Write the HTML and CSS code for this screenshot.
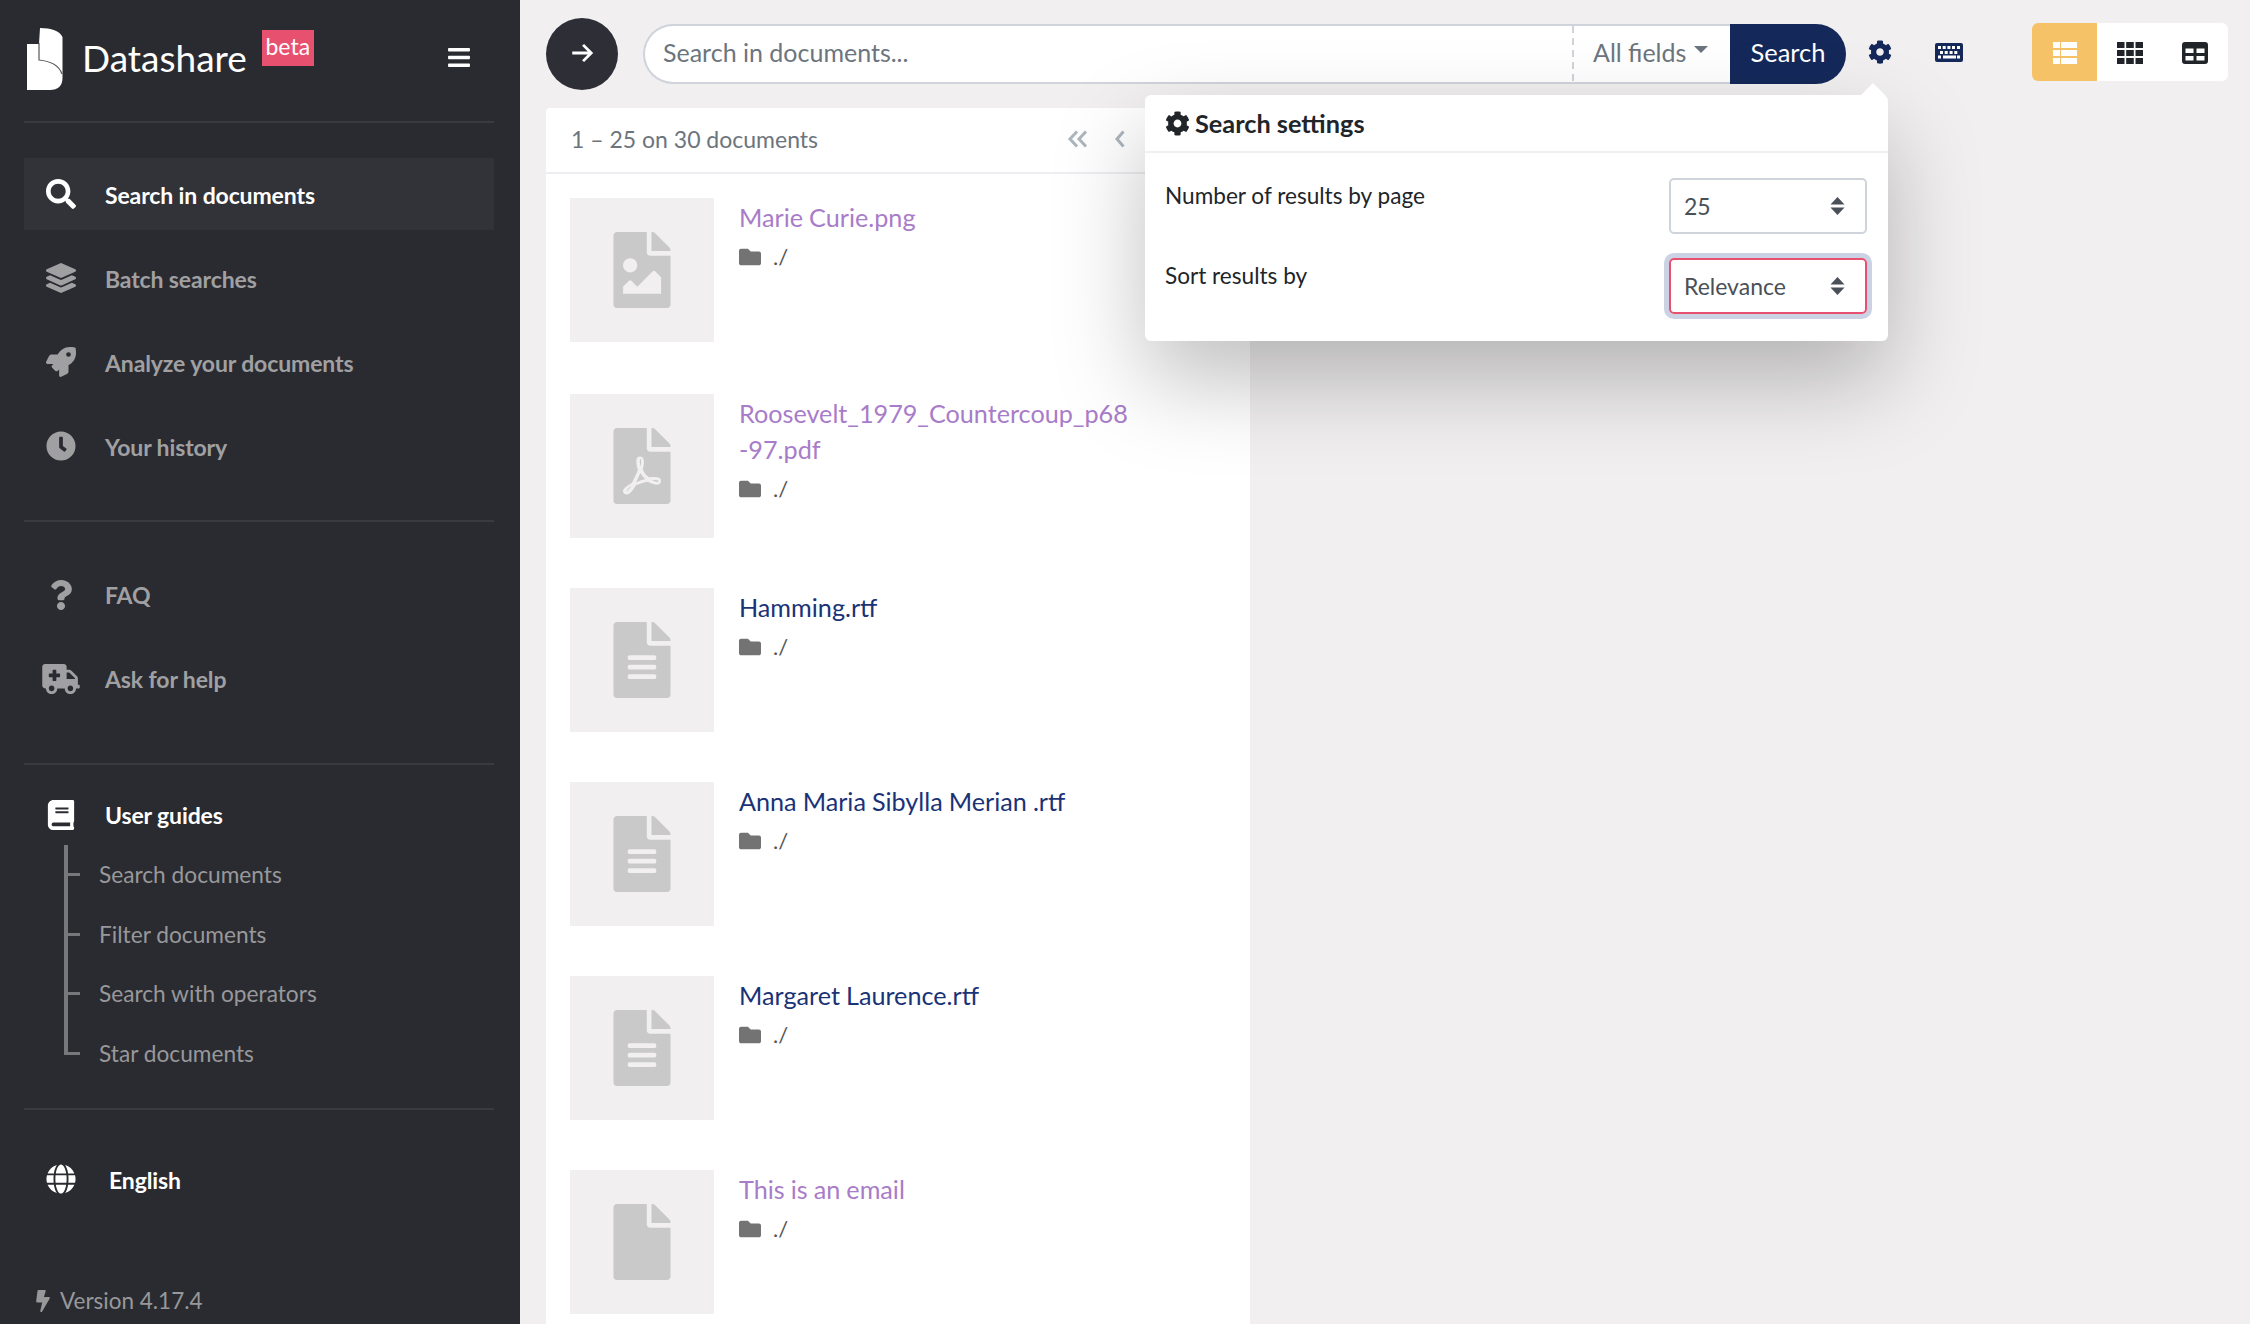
FILE: index.html
```html
<!DOCTYPE html>
<html>
<head>
<title>Datashare</title>
<link rel="stylesheet" href="styles.css">
</head>
<body>
<svg class="defs" xmlns="http://www.w3.org/2000/svg">
  <symbol id="i-search" viewBox="0 0 512 512"><path d="M505 442.7L405.3 343c-4.5-4.5-10.6-7-17-7H372c27.6-35.3 44-79.7 44-128C416 93.1 322.9 0 208 0S0 93.1 0 208s93.1 208 208 208c48.3 0 92.7-16.4 128-44v16.3c0 6.4 2.5 12.5 7 17l99.7 99.7c9.4 9.4 24.6 9.4 33.9 0l28.3-28.3c9.4-9.4 9.4-24.6.1-34zM208 336c-70.7 0-128-57.2-128-128 0-70.7 57.2-128 128-128 70.7 0 128 57.2 128 128 0 70.7-57.2 128-128 128z"/></symbol>
  <symbol id="i-layers" viewBox="0 0 512 512"><path d="M12.41 148.02l232.94 105.67c6.8 3.09 14.49 3.09 21.29 0l232.94-105.67c16.55-7.51 16.55-32.52 0-40.03L266.65 2.31a25.607 25.607 0 0 0-21.29 0L12.41 107.98c-16.55 7.51-16.55 32.53 0 40.04zm487.18 88.28l-58.09-26.33-161.64 73.27c-7.56 3.43-15.59 5.17-23.86 5.17s-16.29-1.74-23.86-5.17L70.51 209.97l-58.1 26.33c-16.55 7.5-16.55 32.5 0 40l232.94 105.59c6.8 3.08 14.49 3.08 21.29 0L499.59 276.3c16.55-7.5 16.55-32.5 0-40zm0 127.8l-57.87-26.23-161.86 73.37c-7.56 3.43-15.59 5.17-23.86 5.17s-16.29-1.74-23.86-5.17L70.29 337.87 12.41 364.1c-16.55 7.5-16.55 32.5 0 40l232.94 105.59c6.8 3.08 14.49 3.08 21.29 0L499.59 404.1c16.55-7.5 16.55-32.5 0-40z"/></symbol>
  <symbol id="i-rocket" viewBox="0 0 512 512"><path d="M505.12 19.09c-1.19-5.53-6.66-11-12.21-12.18C460.72 0 435.51 0 410.41 0 307.18 0 245.27 55.2 199.05 128H94.84c-16.35.02-35.56 11.88-42.89 26.48L2.52 253.3A28.4 28.4 0 0 0 0 264a24 24 0 0 0 24 24h103.82l-22.48 22.47c-11.36 11.36-13 32.26 0 45.25l50.91 50.91c11.16 11.19 32.16 13.16 45.28 0l22.47-22.47V488a24 24 0 0 0 24 24 28.56 28.56 0 0 0 10.71-2.52l98.73-49.39c14.63-7.3 26.51-26.5 26.51-42.86V312.8c72.6-46.31 128.03-108.41 128.03-211.09.01-25.2.01-50.4-6.95-82.62zM384.04 168a40 40 0 1 1 40.01-40 40.02 40.02 0 0 1-40.01 40z"/></symbol>
  <symbol id="i-clock" viewBox="0 0 512 512"><path d="M256 8C119 8 8 119 8 256s111 248 248 248 248-111 248-248S393 8 256 8zm92.49 313l-20 25a16 16 0 0 1-22.49 2.5l-67-49.72a40 40 0 0 1-15-31.23V112a16 16 0 0 1 16-16h32a16 16 0 0 1 16 16v144l58 42.5a16 16 0 0 1 2.49 22.5z"/></symbol>
  <symbol id="i-question" viewBox="0 0 384 512"><path d="M202.021 0C122.202 0 70.503 32.703 29.914 91.026c-7.363 10.58-5.093 25.086 5.178 32.874l43.138 32.709c10.373 7.865 25.132 6.026 33.253-4.148 25.049-31.381 43.63-49.449 82.757-49.449 30.764 0 68.816 19.799 68.816 49.631 0 22.552-18.617 34.134-48.993 51.164-35.423 19.86-82.299 44.576-82.299 106.405V320c0 13.255 10.745 24 24 24h72.471c13.255 0 24-10.745 24-24v-5.773c0-42.86 125.268-44.645 125.268-160.627C377.504 66.256 286.902 0 202.021 0zM192 373.459c-38.196 0-69.271 31.075-69.271 69.271 0 38.195 31.075 69.27 69.271 69.27s69.271-31.075 69.271-69.271-31.075-69.27-69.271-69.27z"/></symbol>
  <symbol id="i-ambulance" viewBox="0 0 640 512"><path d="M624 352h-16V243.9c0-12.7-5.1-24.9-14.1-33.9L494 110.1c-9-9-21.2-14.1-33.9-14.1H416V48c0-26.5-21.5-48-48-48H48C21.5 0 0 21.5 0 48v320c0 26.5 21.5 48 48 48h16c0 53 43 96 96 96s96-43 96-96h128c0 53 43 96 96 96s96-43 96-96h48c8.8 0 16-7.2 16-16v-32c0-8.8-7.2-16-16-16zM160 464c-26.5 0-48-21.5-48-48s21.5-48 48-48 48 21.5 48 48-21.5 48-48 48zm144-248c0 4.4-3.6 8-8 8h-56v56c0 4.4-3.6 8-8 8h-48c-4.4 0-8-3.6-8-8v-56h-56c-4.4 0-8-3.6-8-8v-48c0-4.4 3.6-8 8-8h56v-56c0-4.4 3.6-8 8-8h48c4.4 0 8 3.6 8 8v56h56c4.4 0 8 3.6 8 8v48zm176 248c-26.5 0-48-21.5-48-48s21.5-48 48-48 48 21.5 48 48-21.5 48-48 48zm80-208H416V144h44.1l99.9 99.9V256z"/></symbol>
  <symbol id="i-book" viewBox="0 0 448 512"><path d="M448 360V24c0-13.3-10.7-24-24-24H96C43 0 0 43 0 96v320c0 53 43 96 96 96h328c13.3 0 24-10.7 24-24v-16c0-7.5-3.5-14.3-8.9-18.7-4.2-15.4-4.2-59.3 0-74.7 5.4-4.3 8.9-11.1 8.9-18.6zM128 134c0-3.3 2.7-6 6-6h212c3.3 0 6 2.7 6 6v20c0 3.3-2.7 6-6 6H134c-3.3 0-6-2.7-6-6v-20zm0 64c0-3.3 2.7-6 6-6h212c3.3 0 6 2.7 6 6v20c0 3.3-2.7 6-6 6H134c-3.3 0-6-2.7-6-6v-20zm253.4 250H96c-17.7 0-32-14.3-32-32 0-17.6 14.4-32 32-32h285.4c-1.9 17.1-1.9 46.9 0 64z"/></symbol>
  <symbol id="i-globe" viewBox="0 0 496 512"><path d="M336.5 160C322 70.7 287.8 8 248 8s-74 62.7-88.5 152h177zM152 256c0 22.2 1.2 43.5 3.3 64h185.3c2.1-20.5 3.3-41.8 3.3-64s-1.2-43.5-3.3-64H155.3c-2.1 20.5-3.3 41.8-3.3 64zm324.7-96c-28.6-67.9-86.5-120.4-158-141.6 24.4 33.8 41.2 84.7 50 141.6h108zM177.2 18.4C105.8 39.6 47.8 92.1 19.3 160h108c8.7-56.9 25.5-107.8 49.9-141.6zM487.4 192H372.7c2.1 21 3.3 42.5 3.3 64s-1.2 43-3.3 64h114.6c5.5-20.5 8.6-41.8 8.6-64s-3.1-43.5-8.5-64zM120 256c0-21.5 1.2-43 3.3-64H8.6C3.2 212.5 0 233.8 0 256s3.2 43.5 8.6 64h114.6c-2-21-3.2-42.5-3.2-64zm39.5 96c14.5 89.3 48.7 152 88.5 152s74-62.7 88.5-152h-177zm159.3 141.6c71.4-21.2 129.4-73.7 158-141.6h-108c-8.8 56.9-25.6 107.8-50 141.6zM19.3 352c28.6 67.9 86.5 120.4 158 141.6-24.4-33.8-41.2-84.7-50-141.6h-108z"/></symbol>
  <symbol id="i-bolt" viewBox="0 0 320 512"><path d="M296 160H180.6l42.6-129.8C227.2 15 215.7 0 200 0H56C44 0 33.8 8.9 32.2 20.8l-32 240C-1.7 275.2 9.5 288 24 288h118.7L96.6 482.5c-3.6 15.2 8 29.5 23.3 29.5 8.4 0 16.4-4.4 20.8-12l176-304c9.3-15.9-2.2-36-20.7-36z"/></symbol>
  <symbol id="i-bars" viewBox="0 0 448 512"><path d="M16 132h416c8.837 0 16-7.163 16-16V76c0-8.837-7.163-16-16-16H16C7.163 60 0 67.163 0 76v40c0 8.837 7.163 16 16 16zm0 160h416c8.837 0 16-7.163 16-16v-40c0-8.837-7.163-16-16-16H16c-8.837 0-16 7.163-16 16v40c0 8.837 7.163 16 16 16zm0 160h416c8.837 0 16-7.163 16-16v-40c0-8.837-7.163-16-16-16H16c-8.837 0-16 7.163-16 16v40c0 8.837 7.163 16 16 16z"/></symbol>
  <symbol id="i-cog" viewBox="0 0 512 512"><path d="M487.4 315.7l-42.6-24.6c4.3-23.2 4.3-47 0-70.2l42.6-24.6c4.9-2.8 7.1-8.6 5.5-14-11.1-35.6-30-67.8-54.7-94.6-3.8-4.1-10-5.1-14.8-2.3L380.8 110c-17.9-15.4-38.5-27.3-60.8-35.1V25.8c0-5.6-3.9-10.5-9.4-11.7-36.7-8.2-74.3-7.8-109.2 0-5.5 1.2-9.4 6.1-9.4 11.7V75c-22.2 7.9-42.8 19.8-60.8 35.1L88.7 85.5c-4.9-2.8-11-1.9-14.8 2.3-24.7 26.7-43.6 58.9-54.7 94.6-1.7 5.4.6 11.2 5.5 14L67.3 221c-4.3 23.2-4.3 47 0 70.2l-42.6 24.6c-4.9 2.8-7.1 8.6-5.5 14 11.1 35.6 30 67.8 54.7 94.6 3.8 4.1 10 5.1 14.8 2.3l42.6-24.6c17.9 15.4 38.5 27.3 60.8 35.1v49.2c0 5.6 3.9 10.5 9.4 11.7 36.7 8.2 74.3 7.8 109.2 0 5.5-1.2 9.4-6.1 9.4-11.7v-49.2c22.2-7.9 42.8-19.8 60.8-35.1l42.6 24.6c4.9 2.8 11 1.9 14.8-2.3 24.7-26.7 43.6-58.9 54.7-94.6 1.5-5.5-.7-11.3-5.6-14.1zM256 336c-44.1 0-80-35.9-80-80s35.9-80 80-80 80 35.9 80 80-35.9 80-80 80z"/></symbol>
  <symbol id="i-folder" viewBox="0 0 512 512"><path d="M464 128H272l-64-64H48C21.49 64 0 85.49 0 112v288c0 26.51 21.49 48 48 48h416c26.51 0 48-21.49 48-48V176c0-26.51-21.49-48-48-48z"/></symbol>
  <symbol id="i-file" viewBox="0 0 384 512"><path d="M224 136V0H24C10.7 0 0 10.7 0 24v464c0 13.3 10.7 24 24 24h336c13.3 0 24-10.7 24-24V160H248c-13.2 0-24-10.8-24-24zm160-14.1v6.1H256V0h6.1c6.4 0 12.5 2.5 17 7l97.9 98c4.5 4.5 7 10.6 7 16.9z"/></symbol>
  <symbol id="i-file-alt" viewBox="0 0 384 512"><path d="M224 136V0H24C10.7 0 0 10.7 0 24v464c0 13.3 10.7 24 24 24h336c13.3 0 24-10.7 24-24V160H248c-13.2 0-24-10.8-24-24zm64 236c0 6.6-5.4 12-12 12H108c-6.6 0-12-5.4-12-12v-8c0-6.6 5.4-12 12-12h168c6.6 0 12 5.4 12 12v8zm0-64c0 6.6-5.4 12-12 12H108c-6.6 0-12-5.4-12-12v-8c0-6.6 5.4-12 12-12h168c6.6 0 12 5.4 12 12v8zm0-72v8c0 6.6-5.4 12-12 12H108c-6.6 0-12-5.4-12-12v-8c0-6.6 5.4-12 12-12h168c6.6 0 12 5.4 12 12zm96-114.1v6.1H256V0h6.1c6.4 0 12.5 2.5 17 7l97.9 98c4.5 4.5 7 10.6 7 16.9z"/></symbol>
  <symbol id="i-file-image" viewBox="0 0 384 512"><path d="M384 121.941V128H256V0h6.059a24 24 0 0 1 16.97 7.029l97.941 97.941a24.002 24.002 0 0 1 7.03 16.971zM248 160c-13.2 0-24-10.8-24-24V0H24C10.745 0 0 10.745 0 24v464c0 13.255 10.745 24 24 24h336c13.255 0 24-10.745 24-24V160H248zm-135.455 16c26.51 0 48 21.49 48 48s-21.49 48-48 48-48-21.49-48-48 21.491-48 48-48zm208 240h-256l.485-48.485L104.545 328c4.686-4.686 11.799-4.201 16.485.485L160.545 368 264.06 264.485c4.686-4.686 12.284-4.686 16.97 0L320.545 304v112z"/></symbol>
  <symbol id="i-file-pdf" viewBox="0 0 384 512"><path d="M181.9 256.1c-5-16-4.9-46.9-2-46.9 8.4 0 7.6 36.9 2 46.9zm-1.7 47.2c-7.7 20.2-17.3 43.3-28.4 62.7 18.3-7 39-17.2 62.9-21.9-12.7-9.6-24.9-23.4-34.5-40.8zM86.1 428.1c0 .8 13.2-5.4 34.9-40.2-6.7 6.3-29.1 24.5-34.9 40.2zM248 160h136v328c0 13.3-10.7 24-24 24H24c-13.3 0-24-10.7-24-24V24C0 10.7 10.7 0 24 0h200v136c0 13.2 10.8 24 24 24zm-8 171.8c-20-12.2-33.3-29-42.7-53.8 4.5-18.5 11.6-46.6 6.2-64.2-4.7-29.4-42.4-26.5-47.8-6.8-5 18.3-.4 44.1 8.1 77-11.6 27.6-28.7 64.6-40.8 85.8-.1 0-.1.1-.2.1-27.1 13.9-73.6 44.5-54.5 68 5.6 6.9 16 10 21.5 10 17.9 0 35.7-18 61.1-61.8 25.8-8.5 54.1-19.1 79-23.2 21.7 11.8 47.1 19.5 64 19.5 29.2 0 31.2-32 19.7-43.4-13.9-13.6-54.3-9.7-73.6-7.2zM377 105L279 7c-4.5-4.5-10.6-7-17-7h-6v128h128v-6.1c0-6.3-2.5-12.4-7-16.9zm-74.1 255.3c4.1-2.7-2.5-11.9-42.8-9 37.1 15.8 42.8 9 42.8 9z"/></symbol>
  <symbol id="i-sort" viewBox="0 0 16 19"><path d="M8 0l7.500 8H.5zM8 19L.5 11h15z"/></symbol>
</svg>

<div class="app">
  <aside class="sidebar">
    <div class="brand">
      <svg class="logo" viewBox="0 0 36 62"><path fill="#fff" d="M13 0C24 0 33 3 35.500 9V50C35.500 58 31 62 23 62H0V16H12z"/><path fill="none" stroke="#55565a" stroke-width="1.200" d="M12 15V32C22 33 32 37 35 46"/></svg>
      <span class="brand-name">Datashare</span>
      <span class="beta">beta</span>
      <svg class="burger"><use href="#i-bars"/></svg>
    </div>

    <nav class="group group-main">
      <a class="item active"><span class="ico"><svg><use href="#i-search"/></svg></span>Search in documents</a>
      <a class="item"><span class="ico"><svg><use href="#i-layers"/></svg></span>Batch searches</a>
      <a class="item"><span class="ico"><svg><use href="#i-rocket"/></svg></span>Analyze your documents</a>
      <a class="item"><span class="ico"><svg><use href="#i-clock"/></svg></span>Your history</a>
    </nav>

    <nav class="group group-help">
      <a class="item"><span class="ico"><svg><use href="#i-question"/></svg></span>FAQ</a>
      <a class="item"><span class="ico ico-wide"><svg><use href="#i-ambulance"/></svg></span>Ask for help</a>
    </nav>

    <div class="group group-guides">
      <a class="item item-guides"><span class="ico"><svg><use href="#i-book"/></svg></span>User guides</a>
      <ul class="guides">
        <li>Search documents</li>
        <li>Filter documents</li>
        <li>Search with operators</li>
        <li>Star documents</li>
      </ul>
    </div>

    <a class="item item-lang"><span class="ico"><svg><use href="#i-globe"/></svg></span>English</a>
    <div class="version"><svg><use href="#i-bolt"/></svg>Version 4.17.4</div>
  </aside>

  <main class="main">
    <div class="topbar">
      <button class="back">
        <svg viewBox="0 0 24 24"><path d="M3 12h17M13 4.500l7.500 7.500-7.500 7.500"/></svg>
      </button>
      <form class="search">
        <input type="text" placeholder="Search in documents...">
        <span class="fields">All fields<i class="caret"></i></span>
        <span class="search-btn">Search</span>
      </form>
      <svg class="tool tool-cog"><use href="#i-cog"/></svg>
      <svg class="tool tool-keys" viewBox="0 0 28 19">
        <rect width="28" height="19" rx="2"/>
        <path class="keys" d="M3 3h3v3H3zM7.700 3h3v3h-3zM12.400 3h3v3h-3zM17 3h3v3h-3zM22 3h3v3h-3zM5 8h3v3H5zM9.700 8h3v3h-3zM14.600 8h3v3h-3zM19.300 8h3v3h-3zM3 12.500h3v3H3zM8 12.500h13v3H8zM22 12.500h3v3h-3z"/>
      </svg>
      <div class="views">
        <span class="view on">
          <svg viewBox="0 0 24 22"><path d="M0 0h7v6H0zM8 0h16v6H8zM0 8h7v6H0zM8 8h16v6H8zM0 16h7v6H0zM8 16h16v6H8z"/></svg>
        </span>
        <span class="view">
          <svg viewBox="0 0 26 22"><path d="M0 0h7.500v6H0zM9.200 0h7.600v6H9.200zM18.500 0H26v6h-7.500zM0 8h7.500v6H0zM9.200 8h7.600v6H9.200zM18.500 8H26v6h-7.500zM0 16h7.500v6H0zM9.200 16h7.600v6H9.200zM18.500 16H26v6h-7.500z"/></svg>
        </span>
        <span class="view">
          <svg viewBox="0 0 26 22"><path fill-rule="evenodd" d="M3 0h20a3 3 0 0 1 3 3v16a3 3 0 0 1-3 3H3a3 3 0 0 1-3-3V3a3 3 0 0 1 3-3zM3.500 6.500V11h8V6.500zM14.500 6.500V11h8V6.500zM3.500 14v4.500h8V14zM14.500 14v4.500h8V14z"/></svg>
        </span>
      </div>
    </div>

    <section class="results">
      <header class="results-head">
        <span>1 – 25 on 30 documents</span>
        <span class="pager">
          <svg viewBox="0 0 22 18"><path d="M10 1.500L3 9l7 7.500M19 1.500L12 9l7 7.500"/></svg>
          <svg viewBox="0 0 10 18"><path d="M8.500 1.500L2 9l6.500 7.500"/></svg>
        </span>
      </header>
      <div class="doc">
        <div class="thumb"><svg><use href="#i-file-image"/></svg></div>
        <div class="doc-body"><a class="doc-title seen">Marie Curie.png</a><div class="doc-path"><svg><use href="#i-folder"/></svg>./</div></div>
      </div>
      <div class="doc">
        <div class="thumb"><svg><use href="#i-file-pdf"/></svg></div>
        <div class="doc-body"><a class="doc-title seen">Roosevelt_1979_Countercoup_p68<br>-97.pdf</a><div class="doc-path"><svg><use href="#i-folder"/></svg>./</div></div>
      </div>
      <div class="doc">
        <div class="thumb"><svg><use href="#i-file-alt"/></svg></div>
        <div class="doc-body"><a class="doc-title">Hamming.rtf</a><div class="doc-path"><svg><use href="#i-folder"/></svg>./</div></div>
      </div>
      <div class="doc">
        <div class="thumb"><svg><use href="#i-file-alt"/></svg></div>
        <div class="doc-body"><a class="doc-title">Anna Maria Sibylla Merian .rtf</a><div class="doc-path"><svg><use href="#i-folder"/></svg>./</div></div>
      </div>
      <div class="doc">
        <div class="thumb"><svg><use href="#i-file-alt"/></svg></div>
        <div class="doc-body"><a class="doc-title">Margaret Laurence.rtf</a><div class="doc-path"><svg><use href="#i-folder"/></svg>./</div></div>
      </div>
      <div class="doc">
        <div class="thumb"><svg><use href="#i-file"/></svg></div>
        <div class="doc-body"><a class="doc-title seen">This is an email</a><div class="doc-path"><svg><use href="#i-folder"/></svg>./</div></div>
      </div>
    </section>

    <div class="popover">
      <div class="popover-head"><svg><use href="#i-cog"/></svg>Search settings</div>
      <div class="popover-body">
        <div class="setting">
          <label>Number of results by page</label>
          <div class="select">25<svg><use href="#i-sort"/></svg></div>
        </div>
        <div class="setting">
          <label>Sort results by</label>
          <div class="select focus">Relevance<svg><use href="#i-sort"/></svg></div>
        </div>
      </div>
    </div>
  </main>
</div>
</body>
</html>
```
FILE: styles.css
```css
* {
  box-sizing: border-box;
}
html, body {
  height: 100%;
}
body {
  margin: 0;
  overflow: hidden;
  background: #f1eff0;
  font-family: Lato, sans-serif;
  font-size: 23px;
  color: #212529;
}
.defs {
  display: none;
}
.app {
  display: flex;
  height: 100%;
}

/* sidebar */
.sidebar {
  width: 520px;
  flex: none;
  height: 100%;
  overflow: hidden;
  padding: 0 26px 0 24px;
  background: #2a2b30;
  color: #a0a0a3;
}
.brand {
  display: flex;
  align-items: flex-start;
  height: 123px;
  padding-top: 28px;
  padding-left: 3px;
  border-bottom: 2px solid #3a3b40;
}
.logo {
  width: 36px;
  height: 62px;
  flex: none;
}
.brand-name {
  margin: 7px 0 0 19px;
  font-size: 37px;
  line-height: 46px;
  color: #fff;
}
.beta {
  width: 52px;
  height: 36px;
  margin: 2px 0 0 15px;
  background: #e8506f;
  color: #fff;
  font-size: 23px;
  line-height: 33px;
  text-align: center;
}
.burger {
  width: 22px;
  height: 25px;
  margin: 17px 24px 0 auto;
  fill: #fff;
}
.group {
  border-bottom: 2px solid #3a3b40;
}
.group-main {
  padding: 35px 0 38px;
}
.group-help {
  padding: 37px 0 48px;
}
.group-guides {
  padding-top: 30px;
  padding-bottom: 25px;
}
.item {
  display: flex;
  align-items: center;
  height: 72px;
  margin-bottom: 12px;
  font-weight: 700;
  letter-spacing: -.12px;
}
.group-help .item:last-child,
.group-main .item:last-child {
  margin-bottom: 0;
}
.group-main .item {
  padding-top: 2px;
}
.group-main .ico {
  margin-top: -2px;
}
.item.active {
  background: #323339;
  color: #fff;
}
.ico {
  width: 81px;
  flex: none;
  padding-left: 22px;
  display: flex;
}
.ico svg {
  width: 30px;
  height: 30px;
  fill: currentColor;
}
.ico-wide svg {
  width: 38px;
  margin-left: -4px;
  margin-right: -4px;
}
.item-guides {
  height: 40px;
  margin-bottom: 10px;
  color: #fff;
}
.guides {
  list-style: none;
  margin: 0;
  padding: 0;
}
.guides li {
  position: relative;
  height: 59.500px;
  line-height: 59.500px;
  padding-left: 75px;
  font-size: 22.700px;
  color: #98989b;
}
.guides li::before {
  content: "";
  position: absolute;
  left: 40px;
  top: 0;
  bottom: 0;
  width: 4px;
  background: #77787c;
}
.guides li::after {
  content: "";
  position: absolute;
  left: 44px;
  top: 28px;
  width: 12px;
  height: 3px;
  background: #77787c;
}
.guides li:last-child::before {
  bottom: 28px;
}
.item-lang {
  margin: 33px 0 0;
  padding-top: 2px;
  color: #fff;
}
.item-lang .ico {
  width: 85px;
  margin-top: -2px;
}
.version {
  display: flex;
  align-items: center;
  margin-top: 72px;
  padding-left: 12px;
  font-size: 22.500px;
  color: #98989b;
}
.version svg {
  width: 14px;
  height: 22px;
  margin-right: 10px;
  fill: currentColor;
}

/* top bar */
.main {
  position: relative;
  flex: 1;
  padding-left: 26px;
  min-width: 0;
}
.topbar {
  display: flex;
  align-items: center;
  height: 72px;
  margin-top: 18px;
}
.back {
  width: 72px;
  height: 72px;
  flex: none;
  padding: 0;
  border: 0;
  border-radius: 50%;
  background: #2e2f36;
}
.back svg {
  display: block;
  width: 26px;
  height: 26px;
  margin: -2px auto 0 auto;
  fill: none;
  stroke: #fff;
  stroke-width: 2.600;
}
.search {
  display: flex;
  width: 1203px;
  height: 60px;
  margin-left: 25px;
}
.search input {
  flex: 1;
  min-width: 0;
  padding: 0 18px 5px;
  border: 2px solid #ced4da;
  border-right: 0;
  border-radius: 30px 0 0 30px;
  outline: 0;
  font: inherit;
  font-size: 25px;
  background: #fff;
}
.search input::placeholder {
  color: #6c757d;
  opacity: 1;
}
.fields {
  display: flex;
  align-items: center;
  width: 158px;
  padding: 0 0 4px 21px;
  border: 2px solid #ced4da;
  border-width: 2px 0;
  background: #fff;
  background-image: linear-gradient(#ced4da 60%, transparent 60%);
  background-size: 1.500px 12px;
  background-repeat: repeat-y;
  color: #6c757d;
  font-size: 25px;
}
.caret {
  width: 0;
  height: 0;
  margin-left: 8px;
  margin-top: -6px;
  border: 7px solid transparent;
  border-top-color: #6c757d;
  border-bottom: 0;
}
.search-btn {
  display: flex;
  align-items: center;
  justify-content: center;
  width: 116px;
  padding-bottom: 4px;
  border-radius: 0 30px 30px 0;
  background: #14295a;
  color: #fff;
  font-size: 25.500px;
}
.tool {
  flex: none;
  fill: #14295a;
}
.tool-cog {
  width: 24px;
  height: 26px;
  margin-left: 22px;
  margin-top: -4px;
}
.tool-keys {
  width: 28px;
  height: 19px;
  margin-left: 43px;
  margin-top: -4px;
}
.tool-keys .keys {
  fill: #fff;
}
.views {
  display: flex;
  margin-left: auto;
  margin-right: 22px;
  height: 58px;
  margin-top: -4px;
  overflow: hidden;
  border-radius: 6px;
  background: #fff;
}
.view {
  display: flex;
  align-items: center;
  justify-content: center;
  width: 65.330px;
}
.view svg {
  width: 26px;
  height: 22px;
  margin-top: 1px;
  fill: #212529;
}
.view.on {
  background: #f6c268;
}
.view.on svg {
  width: 24px;
  fill: #fff;
}

/* results */
.results {
  width: 704px;
  height: 1216px;
  overflow: hidden;
  margin-top: 18px;
  border-radius: 4px 4px 0 0;
  background: #fff;
}
.results-head {
  display: flex;
  align-items: center;
  justify-content: space-between;
  height: 66px;
  padding: 0 24px 3px 25px;
  border-bottom: 2px solid #eceef1;
  color: #6c757d;
}
.pager {
  display: flex;
  align-items: center;
  gap: 26px;
  margin-right: 101px;
}
.pager svg {
  height: 18px;
  width: 22px;
  fill: none;
  stroke: #adb5bd;
  stroke-width: 3;
}
.pager svg:last-child {
  width: 10px;
}
.doc {
  display: flex;
  padding: 24px 24px 26px;
  height: 194px;
}
.doc:nth-child(2) {
  height: 196px;
}
.thumb {
  display: flex;
  align-items: center;
  justify-content: center;
  width: 144px;
  height: 144px;
  flex: none;
  background: #f1eff0;
}
.thumb svg {
  width: 58px;
  height: 76px;
  fill: #c9c9c9;
}
.doc-body {
  padding: 1px 0 0 25px;
}
.doc-title {
  display: block;
  font-size: 25.200px;
  line-height: 36px;
  word-spacing: -.4px;
  color: #1a3377;
}
.doc-title.seen {
  color: #a87cc9;
}
.doc-path {
  display: flex;
  align-items: center;
  margin-top: 7px;
  line-height: 30px;
  font-size: 22px;
  color: #555;
}
.doc-path svg {
  width: 22px;
  height: 22px;
  margin-right: 12px;
  fill: #737373;
}

/* popover */
.popover {
  position: absolute;
  left: 625px;
  top: 95px;
  width: 743px;
  height: 246px;
  border-radius: 6px;
  background: #fff;
  box-shadow: 0 40px 90px rgba(0, 0, 0, .25);
  color: #212529;
}
.popover::before {
  content: "";
  position: absolute;
  right: 2px;
  top: -12px;
  width: 0;
  height: 0;
  border: 13px solid transparent;
  border-top: 0;
  border-bottom: 13px solid #fff;
}
.popover-head {
  display: flex;
  align-items: center;
  height: 58px;
  padding-left: 20px;
  border-bottom: 2px solid #f0f0f0;
  font-weight: 700;
  font-size: 25.300px;
}
.popover-head svg {
  width: 25px;
  height: 27px;
  margin-right: 5px;
  fill: #212529;
}
.popover-body {
  padding: 25px 21px 0 20px;
}
.setting {
  display: flex;
  justify-content: space-between;
  height: 80px;
}
.setting label {
  font-size: 22.600px;
  line-height: 35px;
}
.select {
  display: flex;
  align-items: center;
  justify-content: space-between;
  width: 198px;
  height: 56px;
  padding: 0 20px 0 13px;
  border: 2px solid #ced4da;
  border-radius: 5px;
  color: #495057;
}
.select svg {
  width: 15px;
  height: 18px;
  fill: #495057;
}
.select.focus {
  border-color: #e8506f;
  box-shadow: 0 0 0 5px #cbd2e4;
}
```
